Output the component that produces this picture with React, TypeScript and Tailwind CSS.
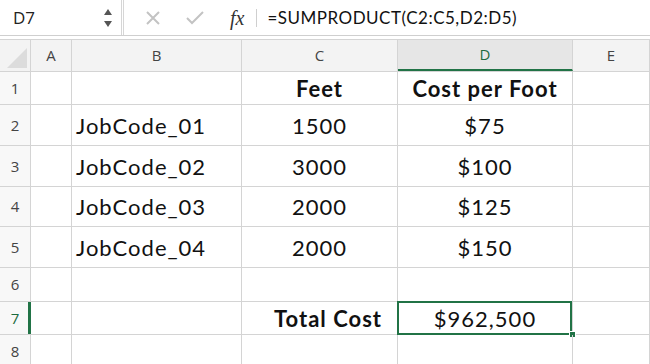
import React from "react";

const cols = ["A", "B", "C", "D", "E"];
const colW = ["w-[41px]", "w-[170px]", "w-[156px]", "w-[175px]", "flex-1"];
const rowH = ["h-[33px]", "h-[41px]", "h-[41px]", "h-[40px]", "h-[41px]", "h-[34px]", "h-[33px]", "h-[33px]"];

type Cell = { text: string; bold?: boolean; align?: "left" | "center" | "right" };

const data: Record<number, Record<string, Cell>> = {
  1: { C: { text: "Feet", bold: true }, D: { text: "Cost per Foot", bold: true } },
  2: { B: { text: "JobCode_01", align: "left" }, C: { text: "1500" }, D: { text: "$75" } },
  3: { B: { text: "JobCode_02", align: "left" }, C: { text: "3000" }, D: { text: "$100" } },
  4: { B: { text: "JobCode_03", align: "left" }, C: { text: "2000" }, D: { text: "$125" } },
  5: { B: { text: "JobCode_04", align: "left" }, C: { text: "2000" }, D: { text: "$150" } },
  7: { C: { text: "Total Cost", bold: true, align: "right" }, D: { text: "$962,500" } },
};

const cellFont = { fontFamily: "Lato, 'Noto Sans', sans-serif" };
const headFont = { fontFamily: "'Open Sans', 'Liberation Sans', sans-serif" };

const FormulaBar = () => (
  <div className="flex h-[36px] items-center border-b border-[#cfcfcf] bg-white">
    <div className="flex h-full w-[121px] items-center justify-between pl-[13px] pr-[8px]">
      <span className="text-[17px] text-[#222]" style={headFont}>D7</span>
      <svg width="10" height="22" viewBox="0 0 10 22">
        <path d="M1 8 L5 2 L9 8 Z" fill="#555" />
        <path d="M1 14 L5 20 L9 14 Z" fill="#555" />
      </svg>
    </div>
    <div className="h-full w-[3px] border-x border-[#d6d6d6]" />
    <div className="flex h-full items-center gap-[26px] pl-[22px]">
      <svg width="14" height="14" viewBox="0 0 14 14">
        <path d="M1 1 L13 13 M13 1 L1 13" stroke="#c3c3c3" strokeWidth="2" />
      </svg>
      <svg width="18" height="14" viewBox="0 0 18 14">
        <path d="M1 7 L6 12 L17 1" stroke="#c3c3c3" strokeWidth="2" fill="none" />
      </svg>
      <span className="text-[20px] italic text-[#333]" style={{ fontFamily: "'Liberation Serif', serif" }}>
        fx
      </span>
    </div>
    <div className="ml-[12px] h-[18px] w-px bg-[#cfcfcf]" />
    <span className="ml-[10px] text-[17px] tracking-[0.5px] text-[#111]" style={cellFont}>
      =SUMPRODUCT(C2:C5,D2:D5)
    </span>
  </div>
);

export default function App() {
  return (
    <div className="h-[364px] w-[650px] overflow-hidden bg-white">
      <FormulaBar />
      <div className="h-[3px]" />
      <div className="flex h-[33px] border-y border-[#d4d4d4] bg-[#f3f3f3]">
        <div className="flex w-[31px] items-end justify-end border-r border-[#d4d4d4] bg-[#f3f3f3] p-[3px]">
          <svg width="20" height="20" viewBox="0 0 20 20">
            <path d="M20 0 L20 20 L0 20 Z" fill="#dcdcdc" />
          </svg>
        </div>
        {cols.map((c, i) => (
          <div
            key={c}
            className={`${colW[i]} flex items-center justify-center border-r border-[#d4d4d4] text-[15px] ${
              c === "D" ? "border-b-2 border-b-[#217346] bg-[#e6e6e6] text-[#1d6b3e]" : "text-[#444]"
            }`}
            style={headFont}
          >
            {c}
          </div>
        ))}
      </div>
      {rowH.map((h, r) => {
        const row = r + 1;
        return (
          <div key={row} className={`flex ${h} border-b border-[#d4d4d4]`}>
            <div
              className={`flex w-[31px] items-center justify-center border-r border-[#d4d4d4] bg-[#f8f8f8] text-[15px] ${
                row === 7 ? "border-r-[3px] border-r-[#217346] pl-[2px] text-[#1d6b3e]" : "text-[#444]"
              }`}
              style={headFont}
            >
              {row}
            </div>
            {cols.map((c, i) => {
              const cell = data[row]?.[c];
              const sel = row === 7 && c === "D";
              const align = cell?.align ?? "center";
              return (
                <div
                  key={c}
                  className={`${colW[i]} relative flex items-center border-r border-[#d4d4d4] px-[4px] text-[22px] tracking-[1px] text-[#111] ${
                    align === "left" ? "justify-start" : align === "right" ? "justify-end pr-[15px]" : "justify-center"
                  } ${cell?.bold ? "font-bold" : ""}`}
                  style={cellFont}
                >
                  {cell?.text}
                  {sel && (
                    <>
                      <div className="absolute -left-px -top-px -bottom-px right-0 border-2 border-[#217346]" />
                      <div className="absolute -bottom-[4px] -right-[4px] h-[7px] w-[7px] border border-white bg-[#217346]" />
                    </>
                  )}
                </div>
              );
            })}
          </div>
        );
      })}
    </div>
  );
}
